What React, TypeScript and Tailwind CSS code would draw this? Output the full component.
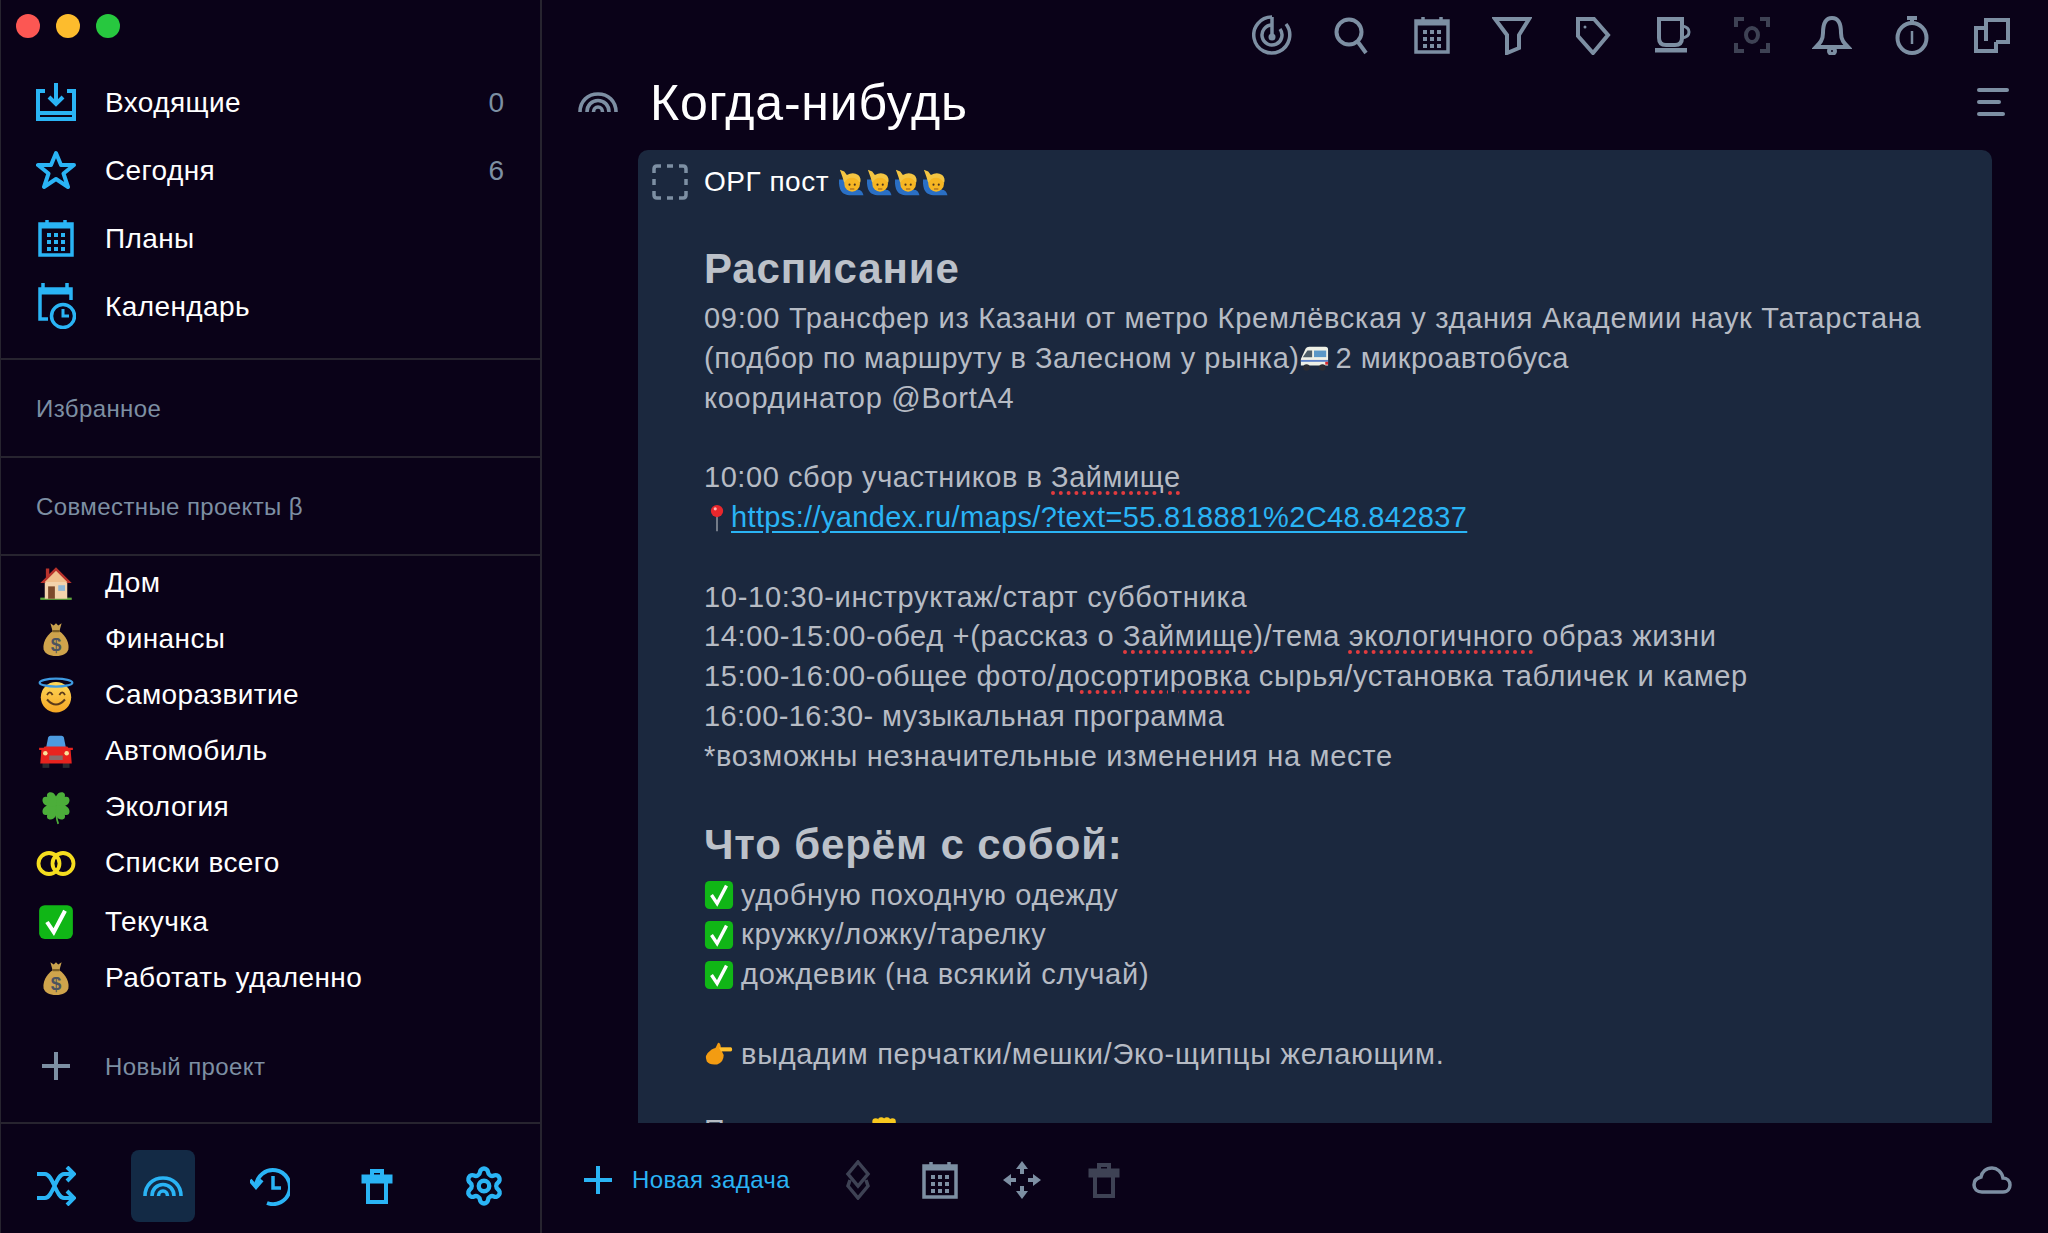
import { Settings } from 'lucide-react'
import type { ReactNode } from 'react'

const BLUE = '#2ab4f5'
const GREY = '#7d8fa3'
const DIM = '#3e4254'

function Ico({ color = GREY, w = 40, h = 40, sw = 3, children }: { color?: string; w?: number; h?: number; sw?: number; children: ReactNode }) {
  return (
    <svg width={w} height={h} viewBox={`0 0 ${w} ${h}`} fill="none" stroke={color} strokeWidth={sw} className="shrink-0">
      {children}
    </svg>
  )
}

function CalIcon({ color = GREY }: { color?: string }) {
  const dots = []
  for (let r = 0; r < 3; r++) for (let c = 0; c < 3; c++) dots.push(<rect key={`${r}${c}`} x={11 + c * 7} y={15 + r * 7} width="4" height="4" fill={color} stroke="none" />)
  return (
    <Ico color={color} sw={3.5}>
      <rect x="4" y="6" width="32" height="31" />
      <path d="M4 8H36" strokeWidth="5" />
      <path d="M11 2V7M29 2V7" />
      {dots}
    </Ico>
  )
}

function Rainbow({ color = GREY, w = 40, h = 20 }: { color?: string; w?: number; h?: number }) {
  return (
    <svg width={w} height={h} viewBox="0 0 40 20" fill="none" stroke={color} strokeWidth="3.6" className="shrink-0">
      <path d="M2 20C2 9 10 2 20 2S38 9 38 20" />
      <path d="M9 20C9 13 14 8.500 20 8.500S31 13 31 20" />
      <path d="M15.500 20C15.500 17 17.500 15 20 15S24.500 17 24.500 20" />
    </svg>
  )
}

function Bin({ color }: { color: string }) {
  return (
    <Ico color={color} sw={4}>
      <path d="M15 10V5H25V10" />
      <rect x="6" y="10" width="28" height="6" fill={color} strokeWidth="3" />
      <path d="M11 16V36H29V16" />
    </Ico>
  )
}

const Emoji = ({ s = 32, children, className = '' }: { s?: number; children: ReactNode; className?: string }) => (
  <svg width={s} height={s} viewBox="0 0 32 32" className={`inline-block shrink-0 ${className}`}>
    {children}
  </svg>
)

const House = () => (
  <Emoji s={36}>
    <path d="M2 29H30V31H2Z" fill="#5fa83c" />
    <path d="M6 14H26V30H6Z" fill="#f3d3ac" />
    <path d="M16 2L30 16H26L16 6L6 16H2L7 11V3H10V8Z" fill="#b8322b" />
    <path d="M16 5L26 15H6Z" fill="#f0c08e" />
    <rect x="9" y="19" width="6" height="11" fill="#7c4a2c" />
    <rect x="18" y="18" width="6" height="5" fill="#8fb7d6" />
  </Emoji>
)

const Bag = () => (
  <Emoji s={36}>
    <path d="M11 2L14 4L16 2L18 4L21 2L19 9H13Z" fill="#c9a24e" />
    <path d="M13 9H19C25 13 28 20 27 25C26 29 22 31 16 31S6 29 5 25C4 20 7 13 13 9Z" fill="#cfa44c" />
    <rect x="13" y="8" width="6" height="2" fill="#7d5f24" />
    <text x="16" y="27" textAnchor="middle" fontSize="17" fontWeight="700" fill="#4c5360" fontFamily="Liberation Sans">$</text>
  </Emoji>
)

const Halo = () => (
  <Emoji s={36}>
    <defs>
      <linearGradient id="fc" x1="0" y1="0" x2="0" y2="1">
        <stop offset="0" stopColor="#ffd95a" />
        <stop offset="1" stopColor="#f5a623" />
      </linearGradient>
    </defs>
    <circle cx="16" cy="18" r="13.500" fill="url(#fc)" />
    <ellipse cx="16" cy="5" rx="14.500" ry="3.500" fill="none" stroke="#3f9ae0" strokeWidth="2" />
    <path d="M8 16Q10.500 11.500 13 16M19 16Q21.500 11.500 24 16" fill="none" stroke="#5b3a1a" strokeWidth="1.600" />
    <path d="M8 20Q16 29 24 20" fill="none" stroke="#5b3a1a" strokeWidth="1.800" />
  </Emoji>
)

const Car = () => (
  <Emoji s={36}>
    <rect x="4" y="26" width="6" height="5" fill="#2a2a30" />
    <rect x="22" y="26" width="6" height="5" fill="#2a2a30" />
    <path d="M7 14L9 4Q9.500 2.500 11 2.500H21Q22.500 2.500 23 4L25 14Z" fill="#4d9be0" />
    <path d="M1 13H5L6 12H26L27 13H31V15H29L30 27H2L3 15H1Z" fill="#e8231e" />
    <rect x="10" y="20" width="12" height="4" fill="#8a6a6a" />
    <circle cx="6.500" cy="18" r="2" fill="#fbe29a" />
    <circle cx="25.500" cy="18" r="2" fill="#fbe29a" />
  </Emoji>
)

const leaf = 'M16 15C10 12 8 6 11 3C13 1 15 2 16 4C17 2 19 1 21 3C24 6 22 12 16 15Z'
const Clover = () => (
  <Emoji s={36}>
    <g fill="#4cae3a">
      <path d={leaf} transform="rotate(45 16 15)" />
      <path d={leaf} transform="rotate(135 16 15)" />
      <path d={leaf} transform="rotate(225 16 15)" />
      <path d={leaf} transform="rotate(315 16 15)" />
    </g>
    <path d="M16 15Q15.500 24 18 31" fill="none" stroke="#4cae3a" strokeWidth="1.600" />
  </Emoji>
)

const Rings = () => (
  <svg width="40" height="25" viewBox="0 0 40 25" fill="none" stroke="#f5dd1f" strokeWidth="3.800" className="shrink-0">
    <circle cx="13" cy="12.500" r="10.500" />
    <circle cx="27" cy="12.500" r="10.500" />
  </svg>
)

const Check = ({ s = 36 }: { s?: number }) => (
  <Emoji s={s}>
    <rect x="1" y="1" width="30" height="30" rx="5" fill="#10b616" />
    <path d="M8 16L14 25L24 6" fill="none" stroke="#fff" strokeWidth="3.600" />
  </Emoji>
)

const Man = () => (
  <Emoji s={28}>
    <path d="M0 13Q-1 31 12 31H28Q26 24 20 25Q9 26 7 13Z" fill="#2a6fc4" />
    <circle cx="15" cy="18" r="9" fill="#f6b623" />
    <path d="M1 2L6 4L9 8Q16 4 22 8Q26 12 24 17Q20 11 15 11Q9 11 6 17Q4 10 1 2Z" fill="#f4c542" />
    <circle cx="12" cy="19" r="1.200" fill="#4b3420" />
    <circle cx="18" cy="19" r="1.200" fill="#4b3420" />
    <path d="M12.500 24H17.500" stroke="#94591d" strokeWidth="1.200" />
  </Emoji>
)

const Van = () => (
  <Emoji s={30}>
    <path d="M7 5Q8 3 11 3H28Q31 3 31 6V23H2V16Z" fill="#eef0e6" />
    <path d="M9 7H14V14H4Z" fill="#4d5d68" />
    <rect x="16" y="7" width="13" height="7" fill="#5a97c7" />
    <path d="M2 17H31V19H2Z" fill="#5a7fc7" />
    <rect x="28" y="19" width="3" height="3" fill="#d9262c" />
    <circle cx="8" cy="25" r="3.500" fill="#2c2c33" />
    <circle cx="25" cy="25" r="3.500" fill="#2c2c33" />
  </Emoji>
)

const Pin = () => (
  <Emoji s={28}>
    <path d="M16 13V31" stroke="#9aa0a8" strokeWidth="1.600" />
    <circle cx="16" cy="8" r="7" fill="#e8272c" />
    <circle cx="14" cy="5.500" r="1.800" fill="#ffb4b4" />
  </Emoji>
)

const Point = () => (
  <Emoji s={30}>
    <path d="M12 9L15 3Q18 3 18 9Z" fill="#f39c12" />
    <path d="M6 12Q10 8 16 8H29Q31 10 29 12H19L21 16Q21 24 14 26Q6 27 3 23Q0 16 6 12Z" fill="#f39c12" />
    <path d="M16 8H29Q31 10 29 12H18Z" fill="#ffc02e" />
  </Emoji>
)

const Fist = () => (
  <Emoji s={30}>
    <g fill="#f8c81e">
      <circle cx="6" cy="7" r="3.500" />
      <circle cx="12" cy="6" r="3.500" />
      <circle cx="18" cy="6" r="3.500" />
      <circle cx="24" cy="7" r="3.500" />
      <rect x="3" y="7" width="24" height="22" />
    </g>
  </Emoji>
)

const nav = [
  {
    label: 'Входящие',
    count: '0',
    icon: (
      <Ico color={BLUE} h={38} sw={4}>
        <path d="M9 8H2V36H38V8H31" />
        <path d="M2 30H38" />
        <path d="M20 0V21M13 14L20 21L27 14" />
      </Ico>
    ),
  },
  {
    label: 'Сегодня',
    count: '6',
    icon: (
      <Ico color={BLUE} sw={4}>
        <path d="M20 3L25 15H38L27.500 23.500L32 37L20 29L8 37L12.500 23.500L2 15H15Z" strokeLinejoin="round" />
      </Ico>
    ),
  },
  { label: 'Планы', icon: <CalIcon color={BLUE} /> },
  {
    label: 'Календарь',
    icon: (
      <Ico color={BLUE} h={46} sw={3.500}>
        <path d="M12 36H4V6H35V17" />
        <path d="M4 9H35" strokeWidth="5" />
        <path d="M7 0V6M31 0V6" />
        <circle cx="27" cy="33" r="11.500" />
        <path d="M27 26V33H33" strokeWidth="3" />
      </Ico>
    ),
  },
]

const projects: { label: string; icon: ReactNode; cls?: string }[] = [
  { label: 'Дом', icon: <House /> },
  { label: 'Финансы', icon: <Bag /> },
  { label: 'Саморазвитие', icon: <Halo /> },
  { label: 'Автомобиль', icon: <Car /> },
  { label: 'Экология', icon: <Clover /> },
  { label: 'Списки всего', icon: <Rings /> },
  { label: 'Текучка', icon: <Check />, cls: 'mt-[3px]' },
  { label: 'Работать удаленно', icon: <Bag /> },
]

const toolbar = [
  <Ico key="radar">
    <path d="M20 2A18 18 0 1 0 34 9" strokeWidth="3.500" />
    <path d="M20 10A10 10 0 1 0 28 14" strokeWidth="3.500" />
    <path d="M20 2V20" strokeWidth="3.500" />
    <circle cx="20" cy="22" r="3.500" fill={GREY} stroke="none" />
  </Ico>,
  <Ico key="search" sw={4}>
    <circle cx="17" cy="17" r="12.500" />
    <path d="M26 27L34 38" />
  </Ico>,
  <CalIcon key="cal" />,
  <Ico key="filter" sw={4}>
    <path d="M3 4H37L27 20V33L15 38V20Z" />
  </Ico>,
  <Ico key="tag" sw={4}>
    <path d="M6 4H22L36 20L21 38L6 21Z" />
    <circle cx="13" cy="12" r="1.500" fill={GREY} stroke="none" />
  </Ico>,
  <Ico key="cup" sw={4}>
    <path d="M7 4H30V23Q30 30 23 30H14Q7 30 7 23Z" />
    <path d="M30 11Q37 12 37 17Q37 22 30 23" strokeWidth="3" />
    <rect x="3" y="33" width="32" height="4.500" fill={GREY} stroke="none" />
  </Ico>,
  <Ico key="focus" color={DIM} sw={4}>
    <path d="M4 12V4H12M28 4H36V12M4 28V36H12M28 36H36V28" />
    <ellipse cx="20" cy="20" rx="6" ry="7" />
  </Ico>,
  <Ico key="bell" sw={4}>
    <path d="M20 3C12 3 11 12 11 18C11 25 8 28 4 32H36C32 28 29 25 29 18C29 12 28 3 20 3Z" />
    <circle cx="20" cy="36" r="3" />
  </Ico>,
  <Ico key="watch" sw={4}>
    <ellipse cx="20" cy="23" rx="14.500" ry="15" />
    <path d="M15 3H25M20 3V8" />
    <path d="M20 16V29" strokeWidth="2.500" />
  </Ico>,
  <Ico key="copy" sw={4}>
    <path d="M14 26V5H36V27H24" />
    <path d="M14 13H4V36H24V27" />
  </Ico>,
]

const footer = [
  <Ico key="shuffle" color={BLUE} sw={4}>
    <path d="M1 8H9C17 8 20 32 28 32H36M1 32H9C17 32 20 8 28 8H36" />
    <path d="M31 1L38 8L31 15M31 25L38 32L31 39" />
  </Ico>,
  <Rainbow key="rainbow" color={BLUE} />,
  <Ico key="history" color={BLUE} sw={4}>
    <path d="M6 20A17 17 0 1 1 17 37" />
    <path d="M0 14L6 21L12 14" />
    <path d="M23 10V22H31" strokeWidth="3.500" />
  </Ico>,
  <Bin key="trash" color={BLUE} />,
  <Settings key="gear" size={42} color={BLUE} strokeWidth={2.5} />,
]

const Sp = ({ children }: { children: ReactNode }) => (
  <span className="underline decoration-dotted decoration-[#e23b3e] decoration-[4px] underline-offset-[4px]">{children}</span>
)

export default function App() {
  return (
    <div className="w-[2048px] h-[1233px] flex overflow-hidden bg-[#0a0218] text-white font-['Liberation_Sans',sans-serif]">
      <aside className="w-[542px] shrink-0 h-full flex flex-col border-r-2 border-l border-[#27242f]">
        <div className="h-[360px] shrink-0 border-b-2 border-[#27242f] pt-[14px]">
          <div className="flex gap-[16px] pl-[15px]">
            <span className="w-[24px] h-[24px] rounded-full bg-[#fc5753]" />
            <span className="w-[24px] h-[24px] rounded-full bg-[#fdbc2d]" />
            <span className="w-[24px] h-[24px] rounded-full bg-[#27c83f]" />
          </div>
          <div className="mt-[30px] flex flex-col">
            {nav.map(n => (
              <div key={n.label} className="h-[68px] flex items-center pl-[35px] pr-[36px]">
                <div className="w-[40px] flex justify-center">{n.icon}</div>
                <span className="ml-[29px] pt-[2px] text-[28px] tracking-[0.4px] flex-1">{n.label}</span>
                {n.count && <span className="pt-[2px] text-[28px] text-[#7d8fa3]">{n.count}</span>}
              </div>
            ))}
          </div>
        </div>
        <div className="h-[98px] shrink-0 border-b-2 border-[#27242f] flex items-center pl-[35px] pt-[2px] text-[24px] tracking-[0.4px] text-[#7d8fa3]">Избранное</div>
        <div className="h-[98px] shrink-0 border-b-2 border-[#27242f] flex items-center pl-[35px] pt-[2px] text-[24px] tracking-[0.4px] text-[#7d8fa3]">Совместные проекты β</div>
        <div className="-mt-[1px] flex flex-col">
          {projects.map(p => (
            <div key={p.label} className={`h-[56px] flex items-center pl-[35px] ${p.cls ?? ''}`}>
              <div className="w-[40px] flex justify-center">{p.icon}</div>
              <span className="ml-[29px] text-[28px] tracking-[0.4px]">{p.label}</span>
            </div>
          ))}
          <div className="mt-[32px] h-[56px] flex items-center pl-[35px] text-[24px] tracking-[0.4px] text-[#7d8fa3]">
            <div className="w-[40px] flex justify-center">
              <Ico sw={4}>
                <path d="M20 6V34M6 20H34" />
              </Ico>
            </div>
            <span className="ml-[29px] pt-[2px]">Новый проект</span>
          </div>
        </div>
        <div className="mt-auto h-[111px] shrink-0 border-t-2 border-[#27242f] pt-[26px] pl-[1px] flex items-start">
          {footer.map((f, i) => (
            <div key={i} className={`w-[107px] h-[72px] flex items-center justify-center ${i === 1 ? 'relative' : ''}`}>
              {i === 1 && <div className="absolute inset-y-0 left-[22px] w-[64px] rounded-lg bg-[#132a45]" />}
              <div className="relative flex">{f}</div>
            </div>
          ))}
        </div>
      </aside>

      <main className="flex-1 min-w-0 flex flex-col">
        <div className="h-[70px] shrink-0 flex justify-end items-center pr-[16px]">
          {toolbar.map((t, i) => (
            <div key={i} className="w-[80px] flex justify-center">{t}</div>
          ))}
        </div>
        <div className="h-[64px] mb-[16px] shrink-0 flex items-center pl-[36px] pr-[39px]">
          <Rainbow />
          <h1 className="ml-[32px] pt-[2px] flex-1 text-[50px] tracking-[0.8px]">Когда-нибудь</h1>
          <svg width="32" height="28" viewBox="0 0 32 28" fill={GREY}>
            <rect x="0" y="0" width="32" height="4" rx="2" />
            <rect x="0" y="12" width="24" height="4" rx="2" />
            <rect x="0" y="24" width="28" height="4" rx="2" />
          </svg>
        </div>
        <section className="ml-[96px] mr-[56px] flex-1 min-h-0 overflow-hidden rounded-t-[10px] bg-[#1b283e] pt-[14px]">
          <div className="flex items-center h-[36px] pl-[14px]">
            <svg width="36" height="36" viewBox="0 0 36 36" fill="none" stroke={GREY} strokeWidth="3.500">
              <path d="M2 9V5Q2 2 5 2H9M27 2H31Q34 2 34 5V9M34 27V31Q34 34 31 34H27M9 34H5Q2 34 2 31V27M15 2H21M15 34H21M2 15V21M34 15V21" />
            </svg>
            <span className="ml-[16px] text-[28px] tracking-[0.5px]">ОРГ пост</span>
            <span className="ml-[10px] flex">
              <Man /><Man /><Man /><Man />
            </span>
          </div>
          <div className="pl-[66px] pr-[20px] text-[29px] leading-[39.8px] tracking-[0.72px] text-[#b6bbc4]">
            <h2 className="mt-[44px] h-[50px] leading-[50px] text-[42px] font-bold text-[#bcc1c9] tracking-[0.85px]">Расписание</h2>
            <div className="mt-[5px]">
              <p>09:00 Трансфер из Казани от метро Кремлёвская у здания Академии наук Татарстана</p>
              <p className="flex items-center tracking-[0.5px]">(подбор по маршруту в Залесном у рынка)<Van /><span className="ml-[6px]">2 микроавтобуса</span></p>
              <p>координатор @BortA4</p>
              <p className="h-[39.8px]" />
              <p className="tracking-[0.55px]">10:00 сбор участников в <Sp>Займище</Sp></p>
              <p className="flex items-center -ml-[1px]">
                <Pin />
                <a className="text-[#2ab4f5] underline underline-offset-[4px] tracking-[0.36px]">https://yandex.ru/maps/?text=55.818881%2C48.842837</a>
              </p>
              <p className="h-[39.8px]" />
              <p>10-10:30-инструктаж/старт субботника</p>
              <p className="tracking-[0.66px]">14:00-15:00-обед +(рассказ о <Sp>Займище</Sp>)/тема <Sp>экологичного</Sp> образ жизни</p>
              <p className="tracking-[0.64px]">15:00-16:00-общее фото/<Sp>досортировка</Sp> сырья/установка табличек и камер</p>
              <p className="tracking-[0.43px]">16:00-16:30- музыкальная программа</p>
              <p>*возможны незначительные изменения на месте</p>
            </div>
            <h2 className="mt-[43px] h-[50px] leading-[50px] text-[42px] font-bold text-[#bcc1c9] tracking-[0.85px]">Что берём с собой:</h2>
            <div className="mt-[6px]">
              {['удобную походную одежду', 'кружку/ложку/тарелку', 'дождевик (на всякий случай)'].map(t => (
                <p key={t} className="flex items-center">
                  <Check s={30} />
                  <span className="ml-[7px]">{t}</span>
                </p>
              ))}
              <p className="h-[39.8px]" />
              <p className="flex items-center">
                <Point />
                <span className="ml-[7px]">выдадим перчатки/мешки/Эко-щипцы желающим.</span>
              </p>
              <p className="h-[36px]" />
              <p className="flex items-center">
                <span className="w-[166px]">Приходите</span>
                <Fist />
              </p>
            </div>
          </div>
        </section>
        <div className="h-[110px] shrink-0 flex items-center pl-[36px] pr-[36px] pt-[4px]">
          <Ico color={BLUE} sw={4}>
            <path d="M20 6V34M6 20H34" />
          </Ico>
          <span className="ml-[14px] text-[24px] tracking-[0.4px] text-[#2ab4f5]">Новая задача</span>
          <div className="ml-[27px] w-[82px] flex justify-center">
            <Ico color={DIM} sw={3.500}>
              <path d="M20 2L30 14L20 26L10 14Z" />
              <path d="M12 20L10 26L20 38L30 26L28 20" />
            </Ico>
          </div>
          <div className="w-[82px] flex justify-center"><CalIcon /></div>
          <div className="w-[82px] flex justify-center">
            <svg width="40" height="40" viewBox="0 0 40 40" fill={GREY}>
              <path d="M20 1L26 9H22V14H18V9H14ZM20 39L14 31H18V26H22V31H26ZM1 20L9 14V18H14V22H9V26ZM39 20L31 26V22H26V18H31V14Z" />
            </svg>
          </div>
          <div className="w-[82px] flex justify-center"><Bin color={DIM} /></div>
          <div className="ml-auto">
            <svg width="40" height="28" viewBox="0 0 40 28" fill="none" stroke={GREY} strokeWidth="3.500">
              <path d="M10 26H31C36 26 38 22 38 19C38 15 35 12 31 12C30 6 25 2 20 2C14 2 10 6 9 11C5 12 2 15 2 19C2 23 5 26 10 26Z" />
            </svg>
          </div>
        </div>
      </main>
    </div>
  )
}
